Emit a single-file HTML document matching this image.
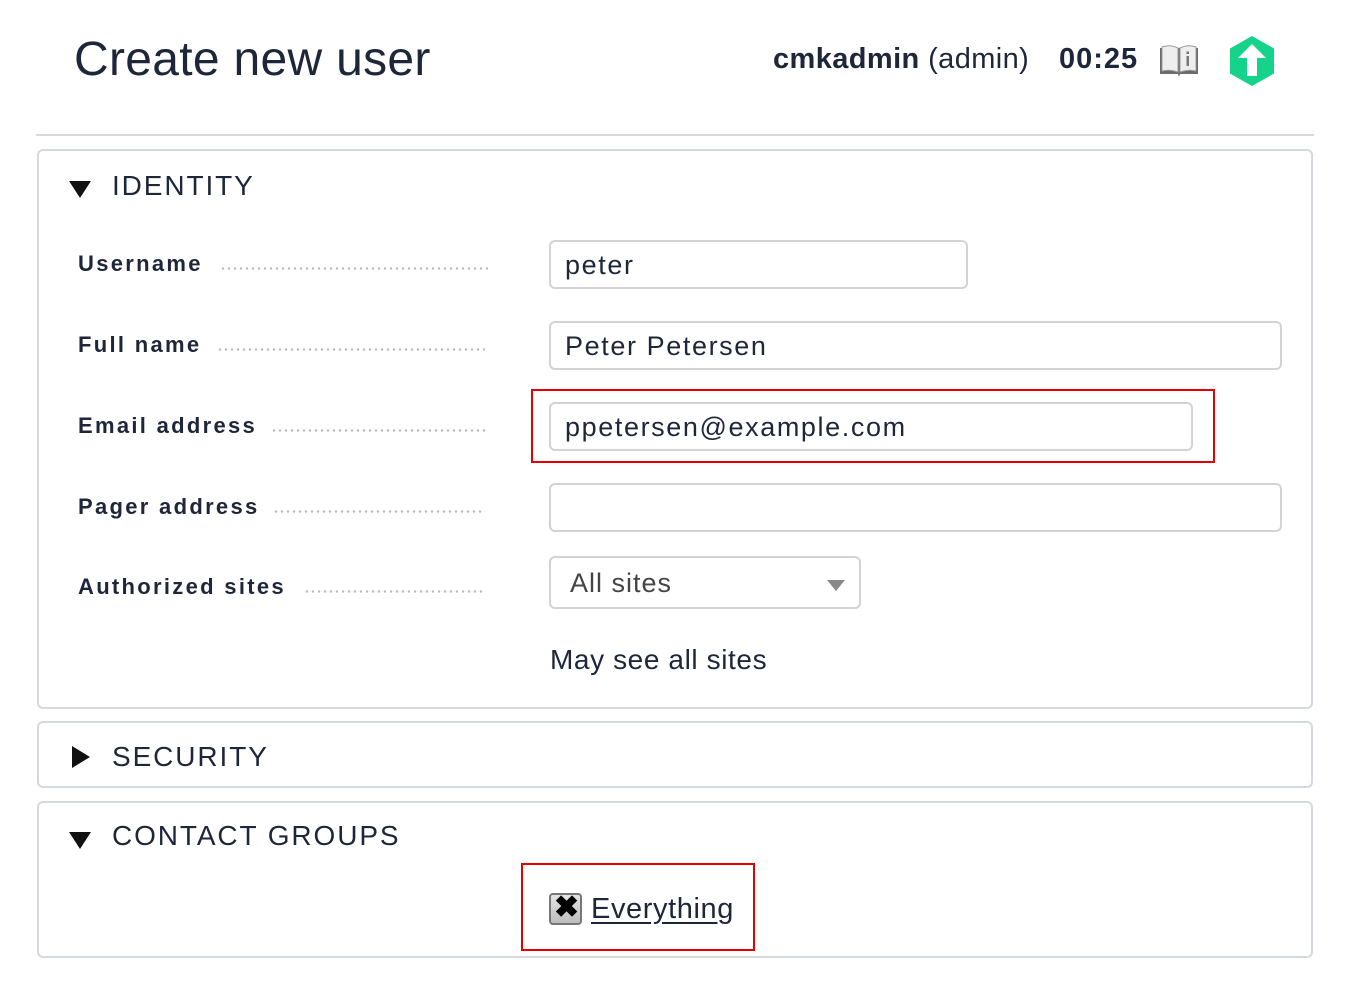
<!DOCTYPE html>
<html><head><meta charset="utf-8"><style>
*{margin:0;padding:0;box-sizing:border-box}
body{width:1350px;height:994px;background:#fff;font-family:"Liberation Sans",sans-serif;color:#1e2639;position:relative;overflow:hidden}
.a{position:absolute;white-space:nowrap}
.box{position:absolute;left:37px;width:1276px;border:2px solid #d6d8df;border-radius:6px}
.lbl{position:absolute;left:78px;font-weight:bold;font-size:22px;letter-spacing:2.3px;color:#1e2639}
.dots{position:absolute;height:3px;background-image:radial-gradient(circle,#bbb 1.1px,transparent 1.4px);background-size:6px 3px}
.in{position:absolute;border:2px solid #d3d3d3;border-radius:6px;font-size:27px;padding-left:14px;letter-spacing:1.6px;display:flex;align-items:center;color:#1e2639;padding-top:2px}
.sec{position:absolute;left:112px;font-size:28px;letter-spacing:1.9px;color:#1e2639}
.red{position:absolute;border:2px solid #e60000}
</style></head><body>
<div class="a" style="left:74px;top:32px;font-size:48px;letter-spacing:0.3px">Create new user</div>
<div class="a" style="left:773px;top:43px;font-size:29px;letter-spacing:0.4px"><b>cmkadmin</b> (admin)</div>
<div class="a" style="left:1059px;top:43px;font-size:29px;font-weight:bold;letter-spacing:1px">00:25</div>
<svg class="a" style="left:1158px;top:44px" width="42" height="34" viewBox="0 0 42 34">
<path d="M2 4 L2 30 L20 30 L21 33 L22 30 L40 30 L40 4 Z" fill="#6a6a6a"/>
<path d="M4 3 Q12 0 20 4 L20 28 Q12 25 4 27 Z" fill="#eee" stroke="#999"/>
<path d="M22 4 Q30 0 38 3 L38 27 Q30 25 22 28 Z" fill="#eee" stroke="#999"/>
<rect x="28.5" y="12" width="2.5" height="10" fill="#777"/><rect x="28.5" y="7.5" width="2.5" height="2.5" fill="#777"/>
</svg>
<svg class="a" style="left:1229px;top:35px" width="46" height="52" viewBox="0 0 46 52">
<path d="M23 1 L45 13.5 L45 38.5 L23 51 L1 38.5 L1 13.5 Z" fill="#15d38a"/>
<path d="M23 9 L37 23 L28 23 L28 41 L18 41 L18 23 L9 23 Z" fill="#fff"/>
</svg>
<div class="a" style="left:36px;top:134px;width:1278px;height:2px;background:#d6d8df"></div>

<div class="box" style="top:149px;height:560px"></div>
<svg class="a" style="left:69px;top:181px" width="22" height="17"><path d="M0 0 L22 0 L11 17Z" fill="#111"/></svg>
<div class="sec" style="top:170px">IDENTITY</div>

<div class="lbl" style="top:251px">Username</div><div class="dots" style="left:220px;top:267px;width:268px"></div>
<div class="lbl" style="top:332px">Full name</div><div class="dots" style="left:217px;top:348px;width:268px"></div>
<div class="lbl" style="top:413px">Email address</div><div class="dots" style="left:271px;top:429px;width:216px"></div>
<div class="lbl" style="top:494px">Pager address</div><div class="dots" style="left:273px;top:510px;width:212px"></div>
<div class="lbl" style="top:574px">Authorized sites</div><div class="dots" style="left:304px;top:590px;width:182px"></div>

<div class="in" style="left:549px;top:240px;width:419px;height:49px">peter</div>
<div class="in" style="left:549px;top:321px;width:733px;height:49px">Peter Petersen</div>
<div class="in" style="left:549px;top:402px;width:644px;height:49px">ppetersen@example.com</div>
<div class="in" style="left:549px;top:483px;width:733px;height:49px"></div>
<div class="in" style="left:549px;top:556px;width:312px;height:53px;padding-left:19px;color:#444;letter-spacing:1px">All sites
<svg style="position:absolute;right:14px;top:22px" width="18" height="11"><path d="M0 0 L18 0 L9 11Z" fill="#888"/></svg></div>
<div class="a" style="left:550px;top:644px;font-size:28px;letter-spacing:0.6px">May see all sites</div>
<div class="red" style="left:531px;top:389px;width:684px;height:74px"></div>

<div class="box" style="top:721px;height:67px"></div>
<svg class="a" style="left:72px;top:746px" width="18" height="22"><path d="M0 0 L18 11 L0 22Z" fill="#111"/></svg>
<div class="sec" style="top:741px">SECURITY</div>

<div class="box" style="top:801px;height:157px"></div>
<svg class="a" style="left:69px;top:832px" width="22" height="17"><path d="M0 0 L22 0 L11 17Z" fill="#111"/></svg>
<div class="sec" style="top:820px">CONTACT GROUPS</div>
<div class="red" style="left:521px;top:863px;width:234px;height:88px"></div>
<div class="a" style="left:549px;top:893px;width:33px;height:32px;border:2px solid #777;border-radius:4px;background:linear-gradient(#e4e4e4,#bdbdbd)"></div>
<div class="a" style="left:554px;top:890px;font-size:30px;font-weight:bold;color:#000">✖</div>
<div class="a" style="left:591px;top:893px;font-size:29px;text-decoration:underline;text-underline-offset:4px;letter-spacing:0.6px">Everything</div>
</body></html>
